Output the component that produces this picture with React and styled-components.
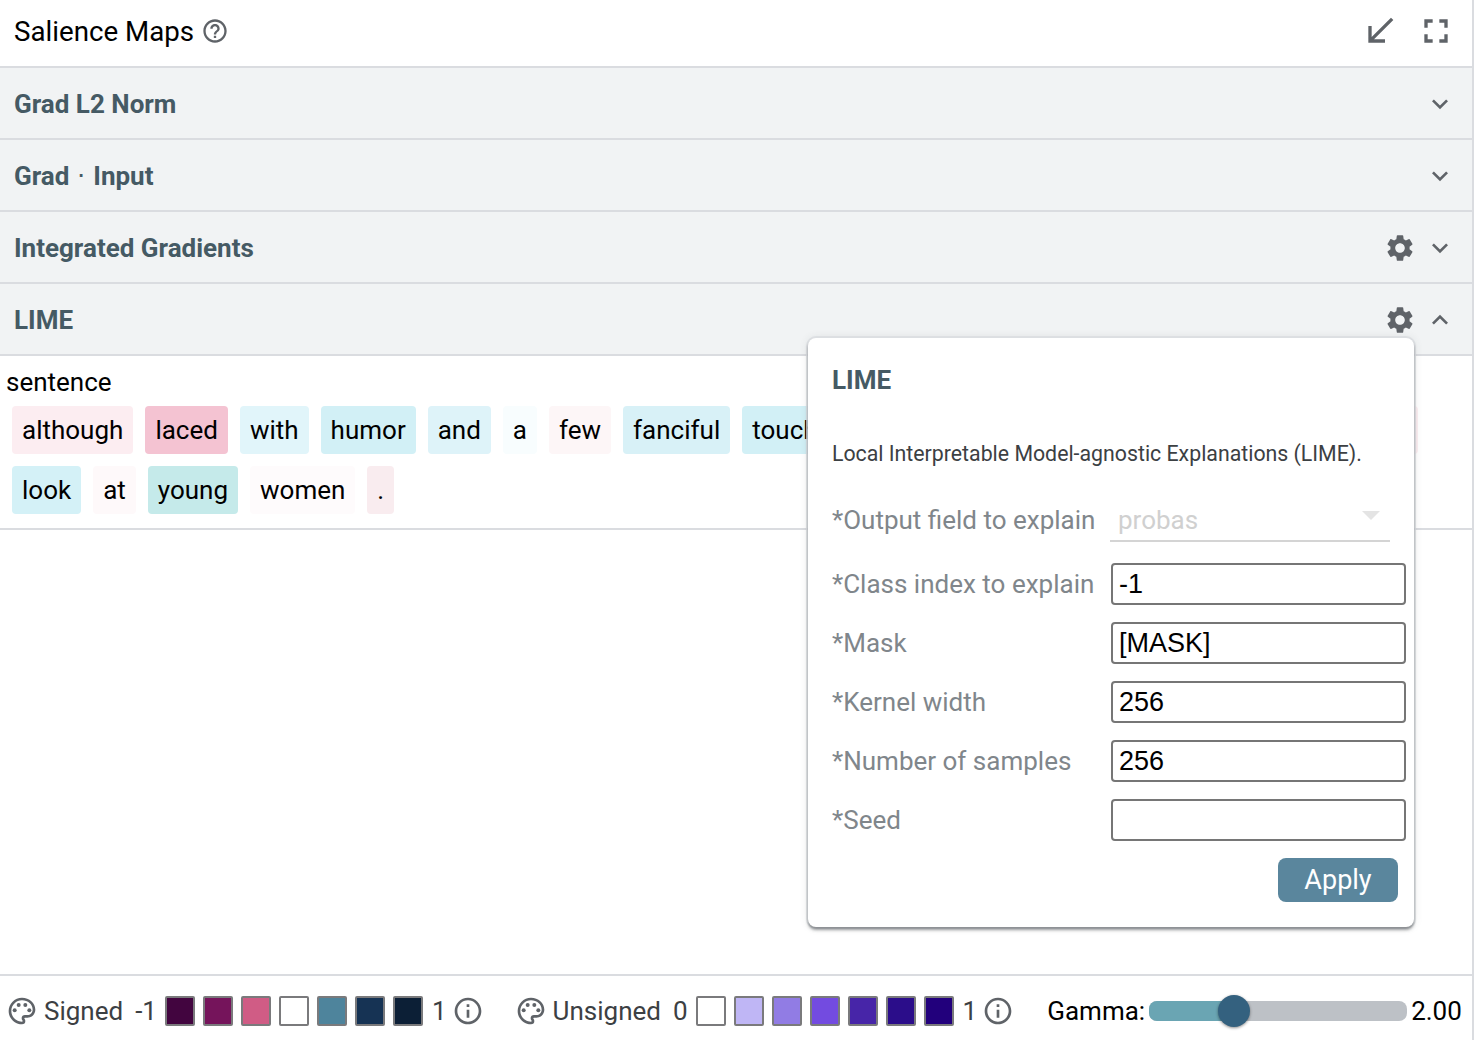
import styled, { createGlobalStyle } from "styled-components";
import {
  MdHelpOutline,
  MdCallReceived,
  MdFullscreen,
  MdExpandMore,
  MdExpandLess,
  MdSettings,
  MdOutlinePalette,
  MdInfoOutline,
} from "react-icons/md";

const GlobalStyle = createGlobalStyle`
  html, body {
    margin: 0;
    padding: 0;
    height: 1040px;
    overflow: hidden;
    background: #fff;
  }
  * { box-sizing: border-box; }
`;

const Page = styled.div`
  position: relative;
  width: 1474px;
  height: 1040px;
  display: flex;
  flex-direction: column;
  border-right: 2px solid #dadce0;
  font-family: Roboto, "Liberation Sans", sans-serif;
  color: #000;
  overflow: hidden;
`;
const Header = styled.header`
  height: 68px;
  flex: none;
  display: flex;
  align-items: center;
  padding: 0 16px 4px 14px;
  border-bottom: 2px solid #dadce0;
`;
const Title = styled.h1`
  margin: 0;
  font-size: 27.7px;
  font-weight: 400;
`;
const HelpIcon = styled(MdHelpOutline)`
  font-size: 28px;
  color: #5f6368;
  margin-left: 7px;
`;
const HeaderActions = styled.div`
  margin-left: auto;
  display: flex;
  align-items: center;
  gap: 16px;
  color: #5f6368;
  font-size: 40px;
`;
const SectionRow = styled.div`
  height: 72px;
  flex: none;
  display: flex;
  align-items: center;
  padding: 2px 16px 0 14px;
  background: #f1f3f4;
  border-bottom: 2px solid #dadce0;
`;
const SectionName = styled.h2`
  margin: 0;
  font-size: 26px;
  font-weight: 700;
  color: #455a64;
  flex: 1;
`;
const Dot = styled.span`
  font-weight: 400;
  margin: 0 1.5px;
`;
const Gear = styled(MdSettings)`
  font-size: 32px;
  color: #5f6368;
  margin-right: 8px;
`;
const Chevron = styled.span`
  display: flex;
  font-size: 32px;
  color: #5f6368;
`;
const Content = styled.section`
  flex: none;
  height: 174px;
  padding: 11px 0 0 6px;
  border-bottom: 2px solid #dadce0;
`;
const FieldName = styled.div`
  font-size: 26px;
  line-height: 30px;
  margin-bottom: 9px;
`;
const Tokens = styled.div`
  display: flex;
  flex-wrap: wrap;
  gap: 12px;
  padding-left: 6px;
  width: 1455px;
`;
const Token = styled.span`
  height: 48px;
  padding: 0 10px;
  display: flex;
  align-items: center;
  border-radius: 4px;
  font-size: 26px;
  background: ${(p) => p.$bg};
`;
const Spacer = styled.div`
  flex: 1;
`;
const Footer = styled.footer`
  height: 66px;
  flex: none;
  display: flex;
  align-items: center;
  padding: 6px 0 0 6px;
  border-top: 2px solid #dadce0;
  font-size: 26px;
  color: #3c4043;
`;
const Legend = styled.div`
  display: flex;
  align-items: center;
  margin-right: ${(p) => p.$after}px;
`;
const PaletteIcon = styled(MdOutlinePalette)`
  font-size: 32px;
  color: #5f6368;
`;
const InfoIcon = styled(MdInfoOutline)`
  font-size: 32px;
  color: #5f6368;
  margin-left: 5px;
`;
const LegendName = styled.span`
  margin-left: 6px;
  margin-right: 12px;
`;
const Swatches = styled.div`
  display: flex;
  gap: 8px;
  margin: 0 9px 0 8px;
`;
const Swatch = styled.span`
  width: 30px;
  height: 30px;
  border: 2px solid #7a7a7c;
  border-radius: 2px;
  background: ${(p) => p.$color};
`;
const Gamma = styled.div`
  display: flex;
  align-items: center;
  color: #000;
`;
const Track = styled.div`
  position: relative;
  width: 258px;
  height: 20px;
  margin: 0 4px;
  border-radius: 8px;
  background: #bdc1c6;
`;
const TrackFill = styled.div`
  height: 100%;
  border-radius: 8px 0 0 8px;
  background: #6aa5b3;
`;
const Thumb = styled.div`
  position: absolute;
  top: -6px;
  width: 32px;
  height: 32px;
  margin-left: -16px;
  border-radius: 50%;
  background: #34617f;
  box-shadow: 0 1px 3px rgba(0, 0, 0, 0.45);
`;
const Popup = styled.div`
  position: absolute;
  left: 808px;
  top: 338px;
  width: 606px;
  height: 589px;
  padding: 26px 8px 0 24px;
  background: #fff;
  border-radius: 8px;
  box-shadow: 0 3px 3px rgba(60, 64, 67, 0.5), 0 0 0 2px rgba(218, 220, 224, 0.8),
    0 0 10px rgba(60, 64, 67, 0.12);
`;
const PopupTitle = styled.h3`
  margin: 0 0 45px;
  font-size: 26px;
  line-height: 32px;
  font-weight: 700;
  color: #455a64;
`;
const Description = styled.p`
  margin: 0 0 18px;
  font-size: 21.3px;
  line-height: 26px;
  color: #3c4043;
`;
const FormRow = styled.div`
  height: ${(p) => p.$height}px;
  display: flex;
  align-items: center;
`;
const FormLabel = styled.label`
  width: 279px;
  flex: none;
  font-size: 26px;
  color: #80868b;
`;
const SelectBox = styled.div`
  position: relative;
  width: 280px;
  height: 45px;
  margin-left: -1px;
  padding: 2px 0 0 8px;
  display: flex;
  align-items: center;
  border-bottom: 2px solid #d4d4d4;
  font-size: 26px;
  color: #d0d0d0;
`;
const SelectArrow = styled.span`
  position: absolute;
  right: 10px;
  top: 14px;
  border-style: solid;
  border-width: 9px 9px 0;
  border-color: #e4e4e4 transparent transparent;
`;
const TextInput = styled.input`
  width: 295px;
  height: 42px;
  margin-top: 1px;
  padding: 0 6px;
  border: 2px solid #767676;
  border-radius: 4px;
  font-family: "Liberation Sans", Arial, sans-serif;
  font-size: 27px;
  color: #000;
  background: #fff;
`;
const Actions = styled.div`
  display: flex;
  justify-content: flex-end;
  padding: 9px 8px 0 0;
`;
const ApplyButton = styled.button`
  width: 120px;
  height: 44px;
  border: 0;
  border-radius: 8px;
  background: #5a869d;
  color: #fff;
  font-family: inherit;
  font-size: 27px;
`;

const SENTENCE = [
  ["although", "#fcedf1"],
  ["laced", "#f4c3d2"],
  ["with", "#e1f5fa"],
  ["humor", "#d2f0f6"],
  ["and", "#def3f9"],
  ["a", "#f8fdfe"],
  ["few", "#fdf6f7"],
  ["fanciful", "#d8f1f7"],
  ["touches", "#d2f0f6"],
  [",", "#fdf6f7"],
  ["the", "#f8fdfe"],
  ["film", "#e1f5fa"],
  ["is", "#f8fdfe"],
  ["a", "#f8fdfe"],
  ["refreshingly", "#e1f5fa"],
  ["serious", "#fbeef1"],
  ["look", "#d4f1f7"],
  ["at", "#fef9fa"],
  ["young", "#c5eaea"],
  ["women", "#fefbfc"],
  [".", "#f9ecef"],
];
const SIGNED = ["#42053f", "#75145b", "#d05c85", "#ffffff", "#4e849c", "#163354", "#0c1f36"];
const UNSIGNED = ["#ffffff", "#bfb6f5", "#917ce4", "#734be0", "#4725a8", "#2b0d8a", "#22007c"];
const FIELDS = [
  ["*Class index to explain", "-1"],
  ["*Mask", "[MASK]"],
  ["*Kernel width", "256"],
  ["*Number of samples", "256"],
  ["*Seed", ""],
];

function Section({ name, gear, open }) {
  return (
    <SectionRow>
      <SectionName>{name}</SectionName>
      {gear && <Gear />}
      <Chevron>{open ? <MdExpandLess /> : <MdExpandMore />}</Chevron>
    </SectionRow>
  );
}

function ColorLegend({ name, min, colors, after }) {
  return (
    <Legend $after={after}>
      <PaletteIcon />
      <LegendName>{name}</LegendName>
      <span>{min}</span>
      <Swatches>
        {colors.map((color) => (
          <Swatch key={color} $color={color} />
        ))}
      </Swatches>
      <span>1</span>
      <InfoIcon />
    </Legend>
  );
}

function App() {
  const gamma = 85;
  return (
    <Page>
      <GlobalStyle />
      <Header>
        <Title>Salience Maps</Title>
        <HelpIcon />
        <HeaderActions>
          <MdCallReceived />
          <MdFullscreen />
        </HeaderActions>
      </Header>
      <Section name="Grad L2 Norm" />
      <Section
        name={
          <>
            Grad <Dot>⋅</Dot> Input
          </>
        }
      />
      <Section name="Integrated Gradients" gear />
      <Section name="LIME" gear open />
      <Content>
        <FieldName>sentence</FieldName>
        <Tokens>
          {SENTENCE.map(([word, bg], i) => (
            <Token key={i} $bg={bg}>
              {word}
            </Token>
          ))}
        </Tokens>
      </Content>
      <Spacer />
      <Footer>
        <ColorLegend name="Signed" min="-1" colors={SIGNED} after={31} />
        <ColorLegend name="Unsigned" min="0" colors={UNSIGNED} after={33} />
        <Gamma>
          Gamma:
          <Track>
            <TrackFill style={{ width: gamma }} />
            <Thumb style={{ left: gamma }} />
          </Track>
          2.00
        </Gamma>
      </Footer>
      <Popup>
        <PopupTitle>LIME</PopupTitle>
        <Description>Local Interpretable Model-agnostic Explanations (LIME).</Description>
        <FormRow $height={69}>
          <FormLabel>*Output field to explain</FormLabel>
          <SelectBox>
            probas
            <SelectArrow />
          </SelectBox>
        </FormRow>
        {FIELDS.map(([label, value]) => (
          <FormRow key={label} $height={59}>
            <FormLabel>{label}</FormLabel>
            <TextInput defaultValue={value} />
          </FormRow>
        ))}
        <Actions>
          <ApplyButton>Apply</ApplyButton>
        </Actions>
      </Popup>
    </Page>
  );
}

export default App;
